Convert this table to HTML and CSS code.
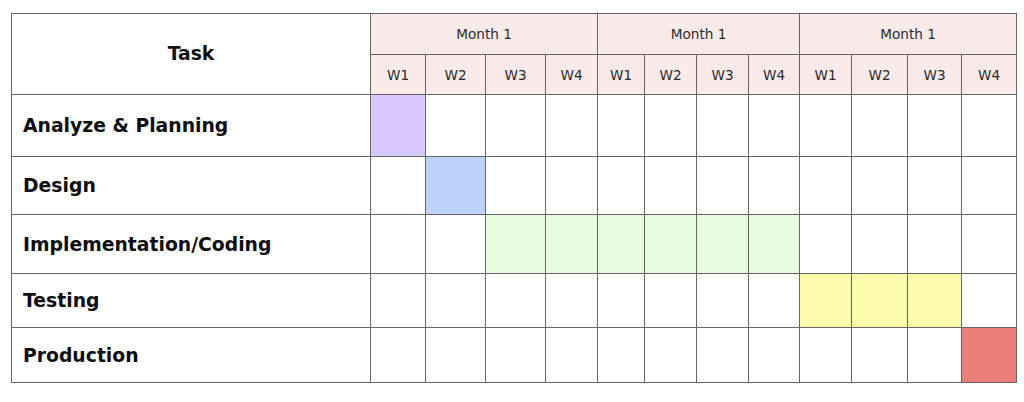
FILE: index.html
```html
<!DOCTYPE html>
<html lang="en">
<head>
<meta charset="utf-8">
<title>Project Timeline</title>
<link rel="stylesheet" href="styles.css">
</head>
<body>
<table class="gantt">
  <colgroup>
    <col class="c-task">
    <col class="w55"><col class="w60"><col class="w60"><col class="w52">
    <col class="w47"><col class="w52"><col class="w52"><col class="w51">
    <col class="w52"><col class="w56"><col class="w54"><col class="w55">
  </colgroup>
  <thead>
    <tr class="r-month">
      <th class="task-head" rowspan="2">Task</th>
      <th class="month" colspan="4">Month 1</th>
      <th class="month" colspan="4">Month 1</th>
      <th class="month" colspan="4">Month 1</th>
    </tr>
    <tr class="r-week">
      <th class="week">W1</th><th class="week">W2</th><th class="week">W3</th><th class="week">W4</th>
      <th class="week">W1</th><th class="week">W2</th><th class="week">W3</th><th class="week">W4</th>
      <th class="week">W1</th><th class="week">W2</th><th class="week">W3</th><th class="week">W4</th>
    </tr>
  </thead>
  <tbody>
    <tr class="r1">
      <td class="label">Analyze &amp; Planning</td>
      <td class="purple"></td><td></td><td></td><td></td><td></td><td></td><td></td><td></td><td></td><td></td><td></td><td></td>
    </tr>
    <tr class="r2">
      <td class="label">Design</td>
      <td></td><td class="blue"></td><td></td><td></td><td></td><td></td><td></td><td></td><td></td><td></td><td></td><td></td>
    </tr>
    <tr class="r3">
      <td class="label">Implementation/Coding</td>
      <td></td><td></td><td class="green"></td><td class="green"></td><td class="green"></td><td class="green"></td><td class="green"></td><td class="green"></td><td></td><td></td><td></td><td></td>
    </tr>
    <tr class="r4">
      <td class="label">Testing</td>
      <td></td><td></td><td></td><td></td><td></td><td></td><td></td><td></td><td class="yellow"></td><td class="yellow"></td><td class="yellow"></td><td></td>
    </tr>
    <tr class="r5">
      <td class="label">Production</td>
      <td></td><td></td><td></td><td></td><td></td><td></td><td></td><td></td><td></td><td></td><td></td><td class="red"></td>
    </tr>
  </tbody>
</table>
</body>
</html>
```

FILE: styles.css
```css
html, body {
  margin: 0;
  padding: 0;
  background: #ffffff;
}

body {
  font-family: "DejaVu Sans", "Noto Sans", sans-serif;
  color: #111111;
}

.gantt {
  margin: 13px 0 0 11px;
  border-collapse: collapse;
  table-layout: fixed;
  width: 1005px;
}

.gantt th,
.gantt td {
  border: 1px solid #666666;
  padding: 0;
}

.c-task { width: 359px; }
.w47 { width: 47px; }
.w51 { width: 51px; }
.w52 { width: 52px; }
.w54 { width: 54px; }
.w55 { width: 55px; }
.w56 { width: 56px; }
.w60 { width: 60px; }

.r-month { height: 41px; }
.r-week { height: 40px; }
.r1 { height: 62px; }
.r2 { height: 58px; }
.r3 { height: 59px; }
.r4 { height: 54px; }
.r5 { height: 55px; }

.gantt .task-head {
  font-size: 18.8px;
  font-weight: 700;
  text-align: center;
  color: #111111;
  background: #ffffff;
  padding-bottom: 2px;
}

.gantt .month,
.gantt .week {
  background: #fbeaea;
  font-weight: 400;
  font-size: 13.6px;
  color: #2a2a2a;
  text-align: center;
}

.gantt .month {
  padding-bottom: 1px;
}

.gantt .label {
  font-size: 18.8px;
  font-weight: 700;
  padding-left: 11px;
  color: #0d0d0d;
}

.purple { background: #d9c8fb; }
.blue { background: #bdd3fa; }
.green { background: #e8fce0; }
.yellow { background: #fdfdad; }
.red { background: #ec7f7b; }
```
